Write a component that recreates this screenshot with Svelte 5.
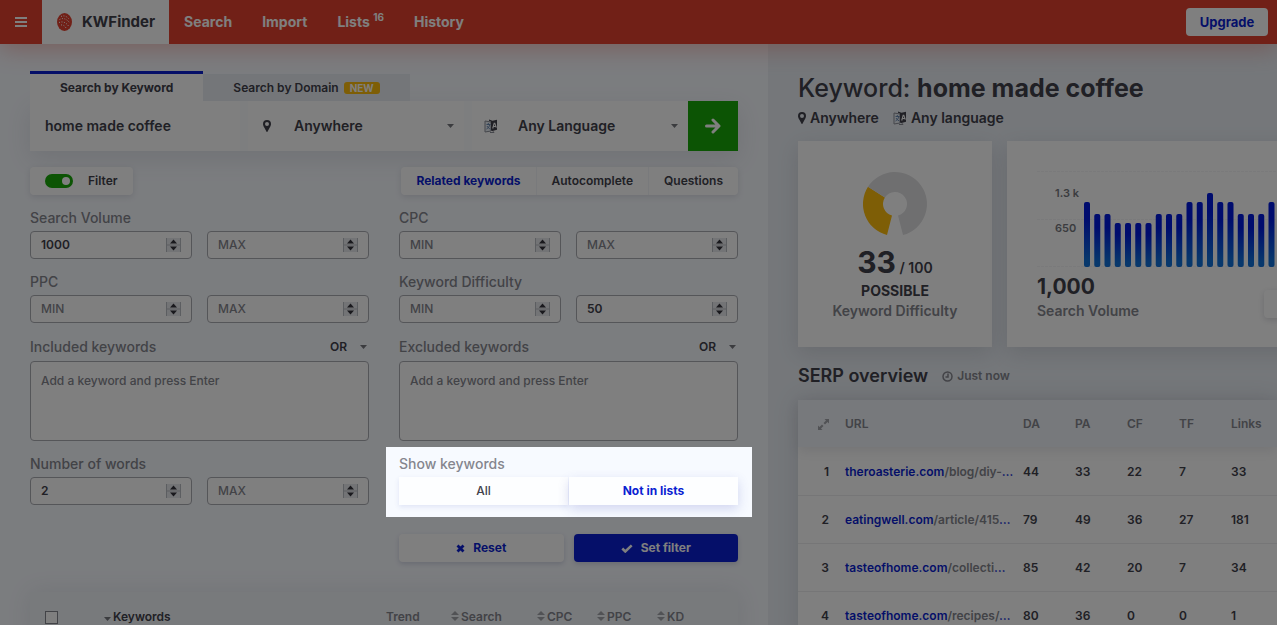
<script>
  const volumes = [1200, 980, 980, 810, 810, 810, 810, 980, 980, 980, 1200, 1200, 1360, 1200, 1200, 980, 980, 980, 1200, 1200];
  const barStep = 10.25;
  const chartBase = 111;

  const serp = [
    { domain: 'theroasterie.com', path: '/blog/diy-', stats: [44, 33, 22, 7, 33] },
    { domain: 'eatingwell.com', path: '/article/415', stats: [79, 49, 36, 27, 181] },
    { domain: 'tasteofhome.com', path: '/collecti', stats: [85, 42, 20, 7, 34] },
    { domain: 'tasteofhome.com', path: '/recipes/', stats: [80, 36, 0, 0, 1] }
  ];

  const sources = ['Related keywords', 'Autocomplete', 'Questions'];

  let source = $state('Related keywords');
  let show = $state('Not in lists');
  let filterOn = $state(true);
  let keyword = $state('home made coffee');

  let ranges = $state({
    volume: { label: 'Search Volume', min: 1000, max: null },
    cpc: { label: 'CPC', min: null, max: null },
    ppc: { label: 'PPC', min: null, max: null },
    kd: { label: 'Keyword Difficulty', min: null, max: 50 },
    words: { label: 'Number of words', min: 2, max: null }
  });

  // tallest bar is 74px
  const barHeight = (v) => Math.round((v / 1360) * 74);
</script>

{#snippet pin()}
  <svg class="pin" viewBox="0 0 8 12" width="8" height="12" aria-hidden="true">
    <path fill-rule="evenodd" d="M4 0a4 4 0 0 1 4 4c0 1.600-.8 2.600-1.400 3.800L4.600 11.600a.7.7 0 0 1-1.200 0L1.400 7.800C.8 6.600 0 5.600 0 4a4 4 0 0 1 4-4zm0 2a2 2 0 1 0 0 4 2 2 0 0 0 0-4z" />
  </svg>
{/snippet}

{#snippet language()}
  <svg class="language" viewBox="0 0 14 14" width="14" height="14" aria-hidden="true">
    <path d="M1 2l6 1v9l-6 1z" fill="#e9eef5" stroke="#8b8e98" stroke-width="1" />
    <path d="M2.500 5.500h4M4.300 4v1.500M5.800 5.500c-.4 2-1.500 3.600-3.300 4.500M3 7c.8 1.500 1.800 2.400 3.300 3" fill="none" stroke="#5f7fa8" stroke-width=".9" />
    <path d="M5 .5l3.500 1.200L13 .8v10L8.500 12 7 11.500v-9L5 1.700z" fill="#41414b" />
    <path d="M8.700 9.500l1.500-5.300h.6l1.500 4.500M9.200 7.700l2.500-.4" fill="none" stroke="#fff" stroke-width="1.100" />
    <path d="M6 13.500h4l-1-1.300" fill="none" stroke="#8b8e98" />
  </svg>
{/snippet}

{#snippet caret()}
  <svg class="caret" viewBox="0 0 7 4" width="7" height="4" aria-hidden="true"><path d="M0 0h7L3.500 4z" /></svg>
{/snippet}

{#snippet sorter()}
  <svg class="sorter" viewBox="0 0 8 10" width="8" height="10" aria-hidden="true"><path d="M4 0l4 4H0zM0 6h8l-4 4z" /></svg>
{/snippet}

{#snippet number(range, side)}
  <div class="number">
    <input type="number" aria-label="{range.label} {side}" placeholder={side.toUpperCase()} bind:value={range[side]} />
    <svg class="stepper" viewBox="0 0 15 14" width="15" height="14" aria-hidden="true">
      <path d="M.5 0v14M14.500 0v14M0 7h15" fill="none" stroke="#b9bcc3" />
      <path d="M7.500 1.500L11 5.500H4zM4 8.500h7l-3.500 4z" fill="#33333b" />
    </svg>
  </div>
{/snippet}

{#snippet rangeField(range)}
  <fieldset class="field">
    <legend>{range.label}</legend>
    <div class="pair">
      {@render number(range, 'min')}
      {@render number(range, 'max')}
    </div>
  </fieldset>
{/snippet}

{#snippet tagField(label, id)}
  <div class="field">
    <div class="field-head">
      <label for={id}>{label}</label>
      <div class="mode">
        <select aria-label="{label} mode"><option>OR</option><option>AND</option></select>
        {@render caret()}
      </div>
    </div>
    <textarea {id} placeholder="Add a keyword and press Enter"></textarea>
  </div>
{/snippet}

<div class="page">
  <header class="topbar">
    <button class="burger" aria-label="Menu">
      <svg viewBox="0 0 12 10" width="12" height="10"><path d="M0 1h12M0 5h12M0 9h12" stroke="#fff" stroke-width="2" /></svg>
    </button>
    <a class="brand" href="#home">
      <svg viewBox="0 0 15 18" width="15" height="18" aria-hidden="true">
        <ellipse cx="7.500" cy="9" rx="7.500" ry="9" fill="#e2412e" />
        <g fill="none" stroke="#fff" stroke-width="1" stroke-dasharray="1 1.500">
          <path d="M4 3.500c3-1.500 6 0 8 2.500M2.500 6.500c4-2 7-.5 10 3M2 9.500c4-1.500 7 0 9.500 3.500M4 12c2-.5 4 1 5 3" />
        </g>
      </svg>
      KWFinder
    </a>
    <nav>
      <a href="#search">Search</a>
      <a href="#import">Import</a>
      <a href="#lists">Lists <sup>16</sup></a>
      <a href="#history">History</a>
    </nav>
    <button class="upgrade">Upgrade</button>
  </header>

  <div class="columns">
    <main class="finder">
      <section>
        <div class="search-tabs">
          <button class="active">Search by Keyword</button>
          <button>Search by Domain <span class="new">NEW</span></button>
        </div>
        <form class="search-row">
          <input class="keyword" type="text" aria-label="Keyword" bind:value={keyword} />
          <div class="picker">
            {@render pin()}
            <select aria-label="Location"><option>Anywhere</option></select>
            {@render caret()}
          </div>
          <div class="picker">
            {@render language()}
            <select aria-label="Language"><option>Any Language</option></select>
            {@render caret()}
          </div>
          <button class="go" type="button" aria-label="Search">
            <svg viewBox="0 0 16 16" width="16" height="16"><path d="M1.500 8h12M8 2l6 6-6 6" fill="none" stroke="#fff" stroke-width="3" stroke-linecap="round" stroke-linejoin="round" /></svg>
          </button>
        </form>
      </section>

      <div class="toolbar">
        <label class="toggle">
          <input type="checkbox" bind:checked={filterOn} />
          <span class="track"></span>
          Filter
        </label>
        <div class="segmented">
          {#each sources as name}
            <button class:active={source === name} onclick={() => (source = name)}>{name}</button>
          {/each}
        </div>
      </div>

      <form class="filters">
        {@render rangeField(ranges.volume)}
        {@render rangeField(ranges.cpc)}
        {@render rangeField(ranges.ppc)}
        {@render rangeField(ranges.kd)}
        {@render tagField('Included keywords', 'included')}
        {@render tagField('Excluded keywords', 'excluded')}
        {@render rangeField(ranges.words)}
        <fieldset class="field spotlight">
          <legend>Show keywords</legend>
          <div class="show">
            {#each ['All', 'Not in lists'] as name}
              <button type="button" class:active={show === name} onclick={() => (show = name)}>{name}</button>
            {/each}
          </div>
        </fieldset>
        <div class="actions">
          <button class="reset" type="reset">
            <svg viewBox="0 0 9 9" width="9" height="9" aria-hidden="true"><path d="M1.500 1.500l6 6M7.500 1.500l-6 6" stroke="currentColor" stroke-width="2.800" /></svg>
            Reset
          </button>
          <button class="apply" type="button">
            <svg viewBox="0 0 12 9" width="12" height="9" aria-hidden="true"><path d="M1.300 4.500l3 3L10.700 1.300" fill="none" stroke="currentColor" stroke-width="2.500" /></svg>
            Set filter
          </button>
        </div>
      </form>

      <table class="keywords">
        <thead>
          <tr>
            <th class="check"><input type="checkbox" aria-label="Select all" /></th>
            <th class="name">{@render caret()}Keywords</th>
            <th class="trend">Trend</th>
            <th class="volume">{@render sorter()}Search</th>
            <th class="metric">{@render sorter()}CPC</th>
            <th class="metric">{@render sorter()}PPC</th>
            <th>{@render sorter()}KD</th>
          </tr>
        </thead>
      </table>
    </main>

    <aside class="detail">
      <h1>Keyword: <strong>home made coffee</strong></h1>
      <p class="meta">
        <span>{@render pin()}Anywhere</span>
        <span>{@render language()}Any language</span>
      </p>

      <div class="cards">
        <section class="card difficulty">
          <svg viewBox="-32 -32 64 64" width="64" height="64" aria-hidden="true">
            <path d="M-8 31A32 32 0 0 1-27-17.200L-10.100-6.500A12 12 0 0 0-3 11.600z" fill="#fdbc0d" />
            <path d="M-27-17.200A32 32 0 1 1 8 31L3 11.600A12 12 0 1 0-10.100-6.500z" fill="#dfdfe1" />
          </svg>
          <p class="score"><strong>33</strong> / 100</p>
          <p class="verdict">POSSIBLE</p>
          <p class="caption">Keyword Difficulty</p>
        </section>

        <section class="card trend-card">
          <svg class="chart" viewBox="0 0 270 112" width="270" height="112" aria-hidden="true">
            <defs>
              <linearGradient id="bar" x1="0" y1="0" x2="0" y2="1">
                <stop offset="0.250" stop-color="#0018dc" />
                <stop offset="0.900" stop-color="#1070d8" />
              </linearGradient>
            </defs>
            <path d="M0 15.500h270M0 63.500h270M0 110.500h270" stroke="#f4f4f6" stroke-dasharray="3 1" />
            <text x="18" y="41">1.3 k</text>
            <text x="18" y="76">650</text>
            {#each volumes as v, i}
              <rect x={47 + i * barStep} y={chartBase - barHeight(v)} width="6" height={barHeight(v)} rx="2" fill="url(#bar)" />
            {/each}
          </svg>
          <div class="trend-foot">
            <div>
              <p class="total">1,000</p>
              <p class="caption">Search Volume</p>
            </div>
            <button aria-label="Trend options"></button>
          </div>
        </section>
      </div>

      <h2>
        SERP overview
        <small>
          <svg viewBox="0 0 11 11" width="11" height="11" aria-hidden="true">
            <circle cx="5.500" cy="5.500" r="4.500" /><path d="M6 2.500v3.500H3.500" />
          </svg>
          Just now
        </small>
      </h2>

      <table class="serp">
        <thead>
          <tr>
            <th class="rank">
              <svg viewBox="0 0 11 11" width="11" height="11" aria-label="Expand"><path d="M6.500 0H11v4.500L9.500 3 7 5.500 5.500 4 8 1.500zM4.500 11H0V6.500L1.500 8 4 5.500 5.500 7 3 9.500z" /></svg>
            </th>
            <th class="url">URL</th>
            <th>DA</th>
            <th>PA</th>
            <th>CF</th>
            <th>TF</th>
            <th class="links">Links</th>
          </tr>
        </thead>
        <tbody>
          {#each serp as row, i}
            <tr>
              <td class="rank">{i + 1}</td>
              <td class="url"><a href="#{row.domain}">{row.domain}<span>{row.path}</span>…</a></td>
              {#each row.stats as n}
                <td>{n}</td>
              {/each}
            </tr>
          {/each}
        </tbody>
      </table>
    </aside>
  </div>
</div>

<style>
  :global(body) { margin: 0; }
  .page {
    --ink: #41414b;
    --muted: #85868e;
    --blue: #0b1fd2;
    --red: #e2412e;
    height: 100vh;
    overflow: hidden;
    display: flex;
    flex-direction: column;
    background: #f7faff;
    color: var(--ink);
    font: 500 14px/18px Inter, "Open Sans", sans-serif;
  }
  .page * { box-sizing: border-box; }
  button, input, select, textarea { font: inherit; color: inherit; margin: 0; }
  button { border: 0; padding: 0; background: #fff; cursor: pointer; }
  a { text-decoration: none; color: inherit; }
  svg { flex: none; }
  h1, h2, p { margin: 0; }

  .topbar {
    flex: none;
    display: flex;
    align-items: center;
    height: 44px;
    padding-right: 9px;
    background: var(--red);
    box-shadow: 0 4px 24px rgba(226, 65, 46, 0.35);
    color: #fff;
    font-size: 14px;
    font-weight: 700;
    z-index: 1;
  }
  .burger { width: 42px; height: 44px; background: none; }
  .burger svg { display: block; margin: auto; }
  .brand {
    display: flex;
    align-items: center;
    gap: 10px;
    height: 44px;
    padding: 0 14px 0 15px;
    background: #fff;
    color: var(--ink);
    font-size: 15px;
  }
  nav { flex: 1; display: flex; gap: 30px; padding-left: 15px; }
  sup { font-size: 10px; line-height: 0; }
  .upgrade { width: 82px; height: 28px; border-radius: 4px; color: var(--blue); font-size: 13px; font-weight: 700; }

  .columns { flex: 1; display: flex; min-height: 0; }
  .finder { flex: 0 0 60%; min-width: 768px; padding: 27px 30px 0; }

  .search-tabs { display: flex; align-items: flex-end; font-size: 12px; }
  .search-tabs button { padding: 0 30px; height: 27px; background: #e8edf3; font-weight: 600; }
  .search-tabs .active { height: 30px; border-top: 3px solid var(--blue); background: #fff; font-weight: 700; }
  .new { margin-left: 2px; padding: 0 6px; border-radius: 3px; background: #fdbc0d; color: #fff; font-size: 10px; font-weight: 700; line-height: 12px; display: inline-block; }
  .search-row { display: flex; height: 50px; background: #fff; font-weight: 600; box-shadow: 0 8px 24px rgba(70, 70, 90, 0.12); }
  .keyword { width: 210px; border: 0; padding: 0 15px; background: none; outline: 0; }
  .picker {
    flex: 1;
    display: flex;
    align-items: center;
    border-left: 8px solid #fafcff;
    padding: 0 10px 0 12px;
    gap: 20px;
  }
  .picker > :first-child { width: 14px; }
  .picker select { flex: 1; min-width: 0; }
  .pin { fill: var(--ink); }
  .caret { fill: #77787f; }
  select { appearance: none; border: 0; background: none; padding: 0; outline: 0; }
  .go { width: 50px; background: #18a808; }
  .go svg { display: block; margin: auto; }

  .toolbar { display: flex; justify-content: space-between; margin-top: 16px; font-size: 12px; font-weight: 600; }
  .toggle, .segmented { height: 28px; border-radius: 4px; background: #fff; box-shadow: 0 2px 6px rgba(70, 70, 90, 0.15); }
  .toggle { display: flex; align-items: center; gap: 15px; padding: 0 15px; }
  .toggle input { position: absolute; opacity: 0; }
  .track { width: 28px; height: 14px; padding: 3px; border-radius: 7px; background: #a9abb3; }
  .track::before { content: ''; display: block; width: 8px; height: 8px; border-radius: 4px; background: #fff; }
  input:checked + .track { background: #18a808; }
  input:checked + .track::before { margin-left: auto; }
  .segmented { display: flex; }
  .segmented button { padding: 0 15px; background: none; }
  .segmented button + button { border-left: 1px solid #f2f4f8; }
  .segmented .active { color: var(--blue); font-weight: 700; }

  .filters { display: grid; grid-template-columns: 1fr 1fr; gap: 14px 30px; margin-top: 14px; }
  .field { min-width: 0; margin: 0; border: 0; padding: 0; color: var(--muted); }
  legend { padding: 0; margin-bottom: 4px; }
  .pair { display: flex; gap: 15px; }
  .number {
    flex: 1;
    min-width: 0;
    display: flex;
    align-items: center;
    height: 28px;
    padding: 0 10px;
    border: 1px solid #aaacb2;
    border-radius: 4px;
    background: #fff;
    font-size: 12px;
  }
  .number input { flex: 1; min-width: 0; border: 0; padding: 0; background: none; outline: 0; color: var(--ink); appearance: textfield; font-weight: 600; }
  .number input::-webkit-inner-spin-button { appearance: none; }
  ::placeholder { color: #85868e; opacity: 1; font-weight: 500; }
  .stepper { background: #e7e8ec; }
  .field-head { display: flex; align-items: center; justify-content: space-between; height: 20px; margin-bottom: 4px; }
  .mode { display: flex; align-items: center; gap: 10px; padding-right: 2px; color: var(--ink); font-size: 12px; font-weight: 600; }
  .mode select { width: 20px; }
  textarea {
    display: block;
    width: 100%;
    height: 80px;
    padding: 10px;
    border: 1px solid #aaacb2;
    border-radius: 4px;
    background: #fff;
    resize: none;
    font-size: 12px;
  }

  /* dims everything except the tour step */
  .spotlight { position: relative; }
  .spotlight::after {
    content: '';
    position: absolute;
    inset: -30px -14px -12px -13px;
    box-shadow: 0 0 0 2000px rgba(0, 0, 0, 0.5);
    pointer-events: none;
    z-index: 10;
  }
  .show { display: flex; gap: 1px; height: 28px; color: var(--ink); font-size: 12px; }
  .show button { flex: 1; background: #fdfeff; box-shadow: 0 2px 5px rgba(60, 70, 180, 0.12); }
  .show .active { color: var(--blue); font-weight: 700; box-shadow: 0 4px 12px rgba(60, 70, 180, 0.2); }
  .actions { grid-column: 2; display: flex; gap: 10px; margin-top: 15px; }
  .actions button {
    flex: 1;
    display: flex;
    align-items: center;
    justify-content: center;
    gap: 8px;
    height: 28px;
    border-radius: 4px;
    color: var(--blue);
    font-size: 12px;
    font-weight: 700;
    box-shadow: 0 2px 5px rgba(60, 70, 120, 0.2);
  }
  .actions .apply { background: #0b1fd2; color: #fff; }

  table { border-collapse: collapse; table-layout: fixed; width: 100%; }
  th { padding: 0; text-align: left; font-weight: 600; color: var(--muted); }
  .keywords { margin-top: 30px; background: #f1f4f9; box-shadow: 0 0 24px rgba(70, 70, 90, 0.1); font-size: 12px; }
  .keywords th { height: 50px; }
  .keywords .check { width: 74px; padding-left: 15px; }
  .check input { appearance: none; display: block; width: 13px; height: 13px; border: 1px solid #85868e; background: #fff; }
  .keywords .name { width: 282px; color: var(--ink); }
  .keywords .trend { width: 65px; }
  .keywords .volume { width: 86px; }
  .keywords .metric { width: 60px; }
  .name .caret { margin-right: 2px; }
  .sorter { margin-right: 2px; fill: #a3a4aa; }

  .detail { flex: 1; min-width: 0; padding: 30px 0 0 30px; background: #eaeff5; }
  h1 { font-size: 25px; line-height: 28px; font-weight: 500; white-space: nowrap; }
  strong { font-weight: 700; }
  .meta { display: flex; gap: 14px; margin-top: 7px; font-weight: 600; }
  .meta span { display: flex; align-items: center; gap: 4px; }
  .cards { display: flex; gap: 15px; margin-top: 14px; }
  .card { height: 206px; background: #fff; box-shadow: 0 6px 20px rgba(70, 70, 90, 0.15); }
  .difficulty { flex: 0 0 194px; display: flex; flex-direction: column; align-items: center; padding-top: 31px; }
  .score { margin-top: 10px; line-height: 32px; font-weight: 600; }
  .score strong { font-size: 30px; line-height: 32px; }
  .verdict { margin-top: -2px; font-weight: 700; }
  .caption { line-height: 22px; font-weight: 600; color: var(--muted); }
  .trend-card { flex: 1 0 330px; padding: 15px 30px 0; }
  .chart { display: block; }
  .chart text { font-size: 11px; font-weight: 600; fill: #77787f; }
  .trend-foot { display: flex; justify-content: space-between; align-items: center; margin-top: 6px; }
  .trend-foot button { width: 43px; height: 28px; margin-top: 12px; border-radius: 4px; box-shadow: 0 2px 6px rgba(70, 70, 90, 0.2); }
  .total { font-size: 21px; line-height: 26px; font-weight: 700; }
  h2 { display: flex; align-items: center; gap: 14px; margin-top: 15px; font-size: 18px; line-height: 28px; font-weight: 600; }
  small { display: flex; align-items: center; gap: 4px; font-size: 12px; color: var(--muted); }
  small svg { fill: none; stroke: currentColor; stroke-width: 1.5; }

  .serp { margin-top: 10px; background: #fff; box-shadow: 0 0 24px rgba(70, 70, 90, 0.15); font-size: 12px; font-weight: 600; }
  .serp thead { background: #eff3f8; box-shadow: 0 4px 12px rgba(70, 70, 90, 0.12); }
  .serp th { height: 47px; width: 52px; }
  .serp td { height: 48px; padding: 2px 0 0; border-bottom: 1px solid #ececef; }
  .serp .rank { width: 47px; padding-right: 16px; text-align: right; }
  .serp .url { width: 178px; white-space: nowrap; }
  .serp th svg { fill: #a3a4aa; vertical-align: middle; }
  .serp .links { width: auto; }
  .serp a { color: var(--blue); }
  .serp a span { color: var(--muted); }
</style>
